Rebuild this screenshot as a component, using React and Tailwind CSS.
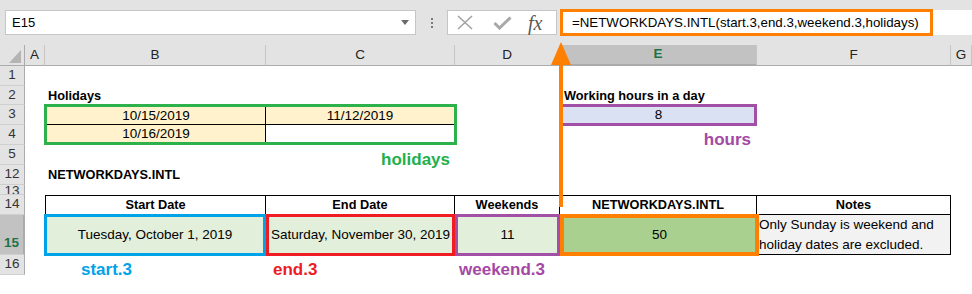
import React from "react";

const rowHeads = [
  { label: "1", cls: "h-[20px] items-center" },
  { label: "2", cls: "h-[19px] items-center" },
  { label: "3", cls: "h-[20px] items-center" },
  { label: "4", cls: "h-[20px] items-center" },
  { label: "5", cls: "h-[20px] items-center" },
  { label: "12", cls: "h-[20px] items-center" },
  { label: "13", cls: "h-[10px] items-start leading-[12px] overflow-hidden" },
  { label: "14", cls: "h-[20px] items-center" },
  { label: "15", cls: "h-[40px] items-end pb-[1px] bg-[#c2c2c2] border-r-2 border-r-[#217346] font-bold text-[#217346]" },
  { label: "16", cls: "h-[20px] items-center" },
];

const colHeads = [
  { label: "A", cls: "w-[20px]" },
  { label: "B", cls: "w-[221px]" },
  { label: "C", cls: "w-[189px]" },
  { label: "D", cls: "w-[105px]" },
  { label: "E", cls: "w-[197px] bg-[#c2c2c2] border-b-2 border-b-[#217346] text-[#217346] font-bold" },
  { label: "F", cls: "w-[194px]" },
  { label: "G", cls: "w-[21px]" },
];

const App = () => {
  return (
    <div className="relative w-[972px] h-[294px] overflow-hidden bg-white text-black font-['Liberation_Sans',Arial,sans-serif]">
      {/* formula bar */}
      <div className="flex h-[45px] bg-[#e3e3e3] pt-[10px] pl-[5px]">
        <div className="w-[411px] h-[25px] bg-white border border-[#c6c6c6] flex items-center justify-between pl-[6px] pr-[6px]">
          <span className="text-[13px]">E15</span>
          <svg width="8" height="5" viewBox="0 0 8 5">
            <path d="M0 0h8L4 5z" fill="#6b6b6b" />
          </svg>
        </div>
        <div className="w-[31px] h-[25px] flex flex-col items-center justify-center gap-[2px]">
          <span className="w-[2px] h-[2px] bg-[#7a7a7a]" />
          <span className="w-[2px] h-[2px] bg-[#7a7a7a]" />
          <span className="w-[2px] h-[2px] bg-[#7a7a7a]" />
        </div>
        <div className="w-[110px] h-[25px] bg-white border border-[#c6c6c6] flex items-center pl-[9px]">
          <svg width="16" height="15" viewBox="0 0 16 15">
            <path d="M1 1L15 14M15 1L1 14" stroke="#a3a3a3" strokeWidth="1.6" />
          </svg>
          <svg className="ml-[20px]" width="19" height="14" viewBox="0 0 19 14">
            <path d="M1.5 7L6.5 12L17.5 1.5" stroke="#a8a8a8" strokeWidth="3" fill="none" />
          </svg>
          <span className="ml-[16px] italic font-['Liberation_Serif',serif] text-[20px] leading-none text-[#595959]">fx</span>
        </div>
        <div className="w-[3px]" />
        <div className="flex-1 h-[25px] bg-white flex">
          <div className="-mt-[1px] w-[373px] h-[27px] border-[3px] border-[#ff7f00] flex items-center pl-[9px] text-[13.3px] whitespace-nowrap">
            =NETWORKDAYS.INTL(start.3,end.3,weekend.3,holidays)
          </div>
        </div>
      </div>

      {/* column headers */}
      <div className="flex h-[21px] bg-[#e3e3e3] text-[13.5px] text-[#222]">
        <div className="w-[25px] h-[21px] border-r border-b border-[#ababab] flex items-end justify-end pr-[3px] pb-[2px]">
          <svg width="12" height="13" viewBox="0 0 12 13">
            <path d="M12 0V13H0Z" fill="#b4b4b4" />
          </svg>
        </div>
        {colHeads.map((c) => (
          <div
            key={c.label}
            className={`h-[21px] flex items-center justify-center border-r border-r-[#c6c6c6] border-b border-b-[#ababab] ${c.cls}`}
          >
            {c.label}
          </div>
        ))}
      </div>

      {/* sheet */}
      <div className="flex">
        <div className="w-[25px] flex flex-col bg-[#e3e3e3] text-[13.5px] text-[#333]">
          {rowHeads.map((r) => (
            <div
              key={r.label}
              className={`flex justify-center border-b border-b-[#cfcfcf] border-r border-r-[#ababab] ${r.cls}`}
            >
              {r.label}
            </div>
          ))}
        </div>

        <div className="grid grid-cols-[20px_221px_189px_105px_197px_194px_21px] grid-rows-[20px_19px_20px_20px_20px_20px_10px_20px_40px_20px] text-[13.5px]">
          {/* row 2 */}
          <div className="col-start-2 row-start-2 flex items-center pl-[3px] font-bold text-[12.75px] whitespace-nowrap">
            Holidays
          </div>
          <div className="col-start-5 row-start-2 flex items-center pl-[4px] font-bold text-[12.75px] whitespace-nowrap">
            Working hours in a day
          </div>

          {/* holidays range */}
          <div className="col-start-2 col-span-2 row-start-3 row-span-2 -mt-[1px] -ml-[1px] -mr-[2px] border-[3px] border-[#2db14b] grid grid-cols-[219px_1fr] grid-rows-[18px_17px] leading-[17px]">
            <div className="bg-[#fff2cc] border-r border-b border-black flex items-center justify-center">10/15/2019</div>
            <div className="bg-[#fff2cc] border-b border-black flex items-center justify-center">11/12/2019</div>
            <div className="bg-[#fff2cc] border-r border-black flex items-center justify-center">10/16/2019</div>
            <div />
          </div>

          {/* working hours */}
          <div className="col-start-5 row-start-3 -my-[1px] border-[3px] border-[#a24fa6] bg-[#d9e1f2] flex items-center justify-center leading-[16px]">
            8
          </div>
          <div className="col-start-5 row-start-4 text-right pr-[6px] pt-[5px] leading-[20px] text-[17px] font-bold text-[#a349a4]">
            hours
          </div>
          <div className="col-start-3 row-start-5 text-right pr-[5px] pt-[5px] leading-[20px] text-[17px] font-bold text-[#22b04a]">
            holidays
          </div>

          {/* row 12 */}
          <div className="col-start-2 row-start-6 flex items-center pl-[3px] font-bold text-[12.75px] whitespace-nowrap">
            NETWORKDAYS.INTL
          </div>

          {/* row 14 headers */}
          <div className="col-start-2 row-start-8 border border-black flex items-center justify-center font-bold text-[12.75px]">Start Date</div>
          <div className="col-start-3 row-start-8 border-y border-r border-black flex items-center justify-center font-bold text-[12.75px]">End Date</div>
          <div className="col-start-4 row-start-8 border-y border-r border-black flex items-center justify-center font-bold text-[12.75px]">Weekends</div>
          <div className="col-start-5 row-start-8 border-y border-r border-black flex items-center justify-center font-bold text-[12.75px]">NETWORKDAYS.INTL</div>
          <div className="col-start-6 row-start-8 border-y border-r border-black flex items-center justify-center font-bold text-[12.75px]">Notes</div>

          {/* row 15 values */}
          <div className="col-start-2 row-start-9 -ml-[1px] -my-[1px] border-[3px] border-[#00a2e8] bg-[#e2efda] flex items-center justify-center whitespace-nowrap">
            Tuesday, October 1, 2019
          </div>
          <div className="col-start-3 row-start-9 -my-[1px] border-[3px] border-[#f01c24] bg-[#e2efda] flex items-center justify-center whitespace-nowrap">
            Saturday, November 30, 2019
          </div>
          <div className="col-start-4 row-start-9 -my-[1px] border-[3px] border-[#a24fa6] bg-[#e2efda] flex items-center justify-center">
            11
          </div>
          <div className="col-start-6 row-start-9 border-r border-b border-black bg-[#f2f2f2] pl-[2px] leading-[20px]">
            Only Sunday is weekend and holiday dates are excluded.
          </div>
          <div className="relative z-10 col-start-5 row-start-9 -my-[1px] -mr-[2px] border-4 border-[#ff7f00] bg-[#a9d08e] flex items-center justify-center">
            50
          </div>

          {/* row 16 names */}
          <div className="col-start-2 row-start-10 pl-[36px] pt-[5px] leading-[20px] text-[17px] font-bold text-[#00a2e8] whitespace-nowrap">
            start.3
          </div>
          <div className="col-start-3 row-start-10 pl-[7px] pt-[5px] leading-[20px] text-[17px] font-bold text-[#ed1c24] whitespace-nowrap">
            end.3
          </div>
          <div className="col-start-4 row-start-10 pl-[4px] pt-[5px] leading-[20px] text-[17px] font-bold text-[#a349a4] whitespace-nowrap">
            weekend.3
          </div>
        </div>
      </div>

      {/* arrow from formula to result cell */}
      <svg className="absolute left-[550px] top-[42px] z-20" width="22" height="166" viewBox="0 0 22 166">
        <path d="M11 0L21 23H1Z" fill="#ff7f00" />
        <rect x="9" y="20" width="4" height="145" fill="#ff7f00" />
      </svg>
    </div>
  );
};

export default App;
